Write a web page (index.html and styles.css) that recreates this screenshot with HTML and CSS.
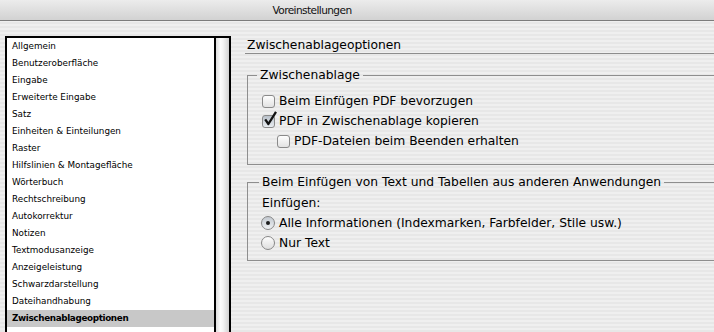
FILE: index.html
```html
<!DOCTYPE html>
<html lang="de">
<head>
    <meta charset="UTF-8">
    <meta name="viewport" content="width=device-width, initial-scale=1.0">
    <title>Voreinstellungen</title>
    <link rel="stylesheet" href="styles.css">
</head>
<body>
    <div class="window">
        <div class="titlebar">Voreinstellungen</div>
        <div class="content">
            <div class="prefList">
                <ul class="items">
                    <li>Allgemein</li>
                    <li>Benutzeroberfläche</li>
                    <li>Eingabe</li>
                    <li>Erweiterte Eingabe</li>
                    <li>Satz</li>
                    <li>Einheiten &amp; Einteilungen</li>
                    <li>Raster</li>
                    <li>Hilfslinien &amp; Montagefläche</li>
                    <li>Wörterbuch</li>
                    <li>Rechtschreibung</li>
                    <li>Autokorrektur</li>
                    <li>Notizen</li>
                    <li>Textmodusanzeige</li>
                    <li>Anzeigeleistung</li>
                    <li>Schwarzdarstellung</li>
                    <li>Dateihandhabung</li>
                    <li class="selected">Zwischenablageoptionen</li>
                </ul>
                <div class="scrollbar"></div>
            </div>

            <div class="panel">
                <h1 class="panelTitle">Zwischenablageoptionen</h1>

                <fieldset class="group clipboard">
                    <legend>Zwischenablage</legend>
                    <label class="option"><span class="check"></span>Beim Einfügen PDF bevorzugen</label>
                    <label class="option">
                        <span class="check checked">
                            <svg class="tick" width="14" height="16" viewBox="0 0 14 16">
                                <path d="M2.2 8.4 L5.4 13 L13 0.8" fill="none" stroke="#111" stroke-width="2.3" stroke-linejoin="round"/>
                            </svg>
                        </span>PDF in Zwischenablage kopieren
                    </label>
                    <label class="option sub"><span class="check"></span>PDF-Dateien beim Beenden erhalten</label>
                </fieldset>

                <fieldset class="group paste">
                    <legend>Beim Einfügen von Text und Tabellen aus anderen Anwendungen</legend>
                    <div class="option">Einfügen:</div>
                    <label class="option"><span class="radio on"></span>Alle Informationen (Indexmarken, Farbfelder, Stile usw.)</label>
                    <label class="option"><span class="radio"></span>Nur Text</label>
                </fieldset>
            </div>
        </div>
    </div>
</body>
</html>
```

FILE: styles.css
```css
body, html {
    margin: 0;
    padding: 0;
    width: 714px;
    height: 332px;
    overflow: hidden;
}

body {
    font-family: "DejaVu Sans", sans-serif;
    color: #000;
    background: repeating-linear-gradient(to bottom, #efefef 0, #efefef 2px, #e7e7e7 2px, #e7e7e7 4px);
}

.titlebar {
    height: 20px;
    line-height: 21px;
    padding-right: 90px;
    text-align: center;
    font-size: 10.6px;
    letter-spacing: -0.6px;
    color: #111;
    background: linear-gradient(to bottom, #ececec, #d2d2d2);
    border-bottom: 1px solid #7c7c7c;
}

.content {
    display: flex;
    align-items: flex-start;
}

/* linke Liste */
.prefList {
    display: flex;
    margin: 15px 0 0 5px;
    width: 226px;
    height: 296px;
    box-sizing: border-box;
    border: 2px solid #000;
    border-bottom: none;
    background: #fff;
}

.items {
    list-style: none;
    margin: 0;
    padding: 0;
    flex: 1;
    font-size: 8.8px;
}

.items li {
    height: 17px;
    line-height: 17px;
    padding-left: 5px;
    white-space: nowrap;
}

.items li.selected {
    background: #c8c8c8;
    font-weight: bold;
    letter-spacing: -0.35px;
}

.scrollbar {
    width: 13px;
    border-left: 2px solid #000;
    background: linear-gradient(to right, #dcdcdc, #fcfcfc 35%, #f4f4f4 55%, #d2d2d2);
}

/* rechte Seite */
.panel {
    flex: 1;
    margin-left: 14px;
    padding-top: 17px;
    font-size: 12.3px;
}

.panelTitle {
    margin: 0;
    font-size: 12.3px;
    font-weight: normal;
    line-height: 15px;
    padding-left: 2px;
    border-bottom: 1px solid #8c8c8c;
}

.group {
    margin: 14px 0 0 2px;
    padding: 8px 0 13px 14px;
    border: 1px solid #8e8e8e;
    border-right: none;
    min-width: 0;
}

.group legend {
    margin-left: -5px;
    padding: 0 3px;
    line-height: 15px;
}

.group.paste {
    margin-top: 10px;
    padding-top: 3px;
    padding-bottom: 7px;
}

.group.paste legend {
    margin-left: -3px;
}

.option {
    display: flex;
    align-items: center;
    height: 20px;
    white-space: nowrap;
}

.option.sub {
    padding-left: 15px;
}

.check {
    position: relative;
    flex: none;
    width: 13px;
    height: 13px;
    margin-right: 4px;
    box-sizing: border-box;
    border: 1px solid #8a8a8a;
    border-radius: 3px;
    background: linear-gradient(to bottom, #fefefe, #e2e2e2);
}

.check.checked {
    background: linear-gradient(to bottom, #b9c1ca, #e9edf1);
}

.tick {
    position: absolute;
    left: 0;
    top: -5px;
}

.radio {
    display: flex;
    align-items: center;
    justify-content: center;
    flex: none;
    width: 14px;
    height: 14px;
    margin-left: -1px;
    margin-right: 4px;
    box-sizing: border-box;
    border: 1px solid #878787;
    border-radius: 50%;
    background: linear-gradient(to bottom, #fdfdfd, #dedede);
}

.radio.on {
    background: linear-gradient(to bottom, #c3c9d0, #eef0f2);
}

.radio.on::after {
    content: "";
    width: 4px;
    height: 4px;
    border-radius: 50%;
    background: #1c1c1c;
}
```
